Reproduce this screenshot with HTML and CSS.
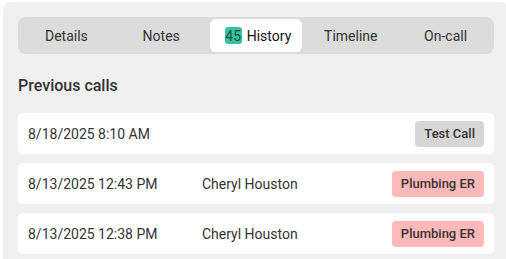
FILE: index.html
```html
<!DOCTYPE html>
<html lang="en">

<head>
  <meta charset="UTF-8" />
  <title>Call History</title>
  <link rel="stylesheet" href="styles.css">
</head>

<body>

  <div class="panel">
    <div class="tabs">
      <div class="tab">Details</div>
      <div class="tab">Notes</div>
      <div class="tab active"><span class="count">45</span>History</div>
      <div class="tab">Timeline</div>
      <div class="tab">On-call</div>
    </div>

    <h2 class="heading">Previous calls</h2>

    <div class="calls">
      <div class="call">
        <span>8/18/2025 8:10 AM</span>
        <span></span>
        <span class="tag tag-test">Test Call</span>
      </div>
      <div class="call">
        <span>8/13/2025 12:43 PM</span>
        <span>Cheryl Houston</span>
        <span class="tag tag-er">Plumbing ER</span>
      </div>
      <div class="call">
        <span>8/13/2025 12:38 PM</span>
        <span>Cheryl Houston</span>
        <span class="tag tag-er">Plumbing ER</span>
      </div>
    </div>
  </div>

</body>

</html>
```

FILE: styles.css
```css
body {
  margin: 0;
  padding: 2px 0 0 3px;
  background: #fff;
  font-family: Roboto, "Liberation Sans", sans-serif;
  color: #333;
  overflow: hidden;
}

.panel {
  width: 476px;
  padding: 15px;
  background: #f0f0f0;
  border-radius: 8px;
  height: 242px;
}

.tabs {
  display: flex;
  gap: 2px;
  padding: 2px;
  background: #dcdcdc;
  border-radius: 8px;
}

.tab {
  flex: 1;
  height: 33px;
  display: flex;
  align-items: center;
  justify-content: center;
  font-size: 14px;
  color: #333;
  border-radius: 6px;
}

.tab.active {
  background: #fff;
  color: #111;
}

.count {
  display: inline-flex;
  align-items: center;
  justify-content: center;
  width: 17px;
  height: 17px;
  margin: 0 5px 0 4px;
  background: #35c3a0;
  color: #1d4f43;
  border-radius: 3px;
  font-size: 14px;
}

.heading {
  margin: 22px 0 18px;
  font-size: 16px;
  font-weight: 500;
  color: #333;
}

.calls {
  display: flex;
  flex-direction: column;
  gap: 9px;
}

.call {
  display: grid;
  grid-template-columns: 174px 1fr auto;
  align-items: center;
  height: 41px;
  padding: 0 10px;
  background: #fff;
  border-radius: 5px;
  font-size: 14px;
}

.tag {
  height: 26px;
  padding: 0 9px;
  display: flex;
  align-items: center;
  border-radius: 4px;
  font-size: 13px;
  font-weight: 500;
  color: #333;
}

.tag-test {
  background: #d6d6d6;
}

.tag-er {
  background: #ffb9b9;
}
```
